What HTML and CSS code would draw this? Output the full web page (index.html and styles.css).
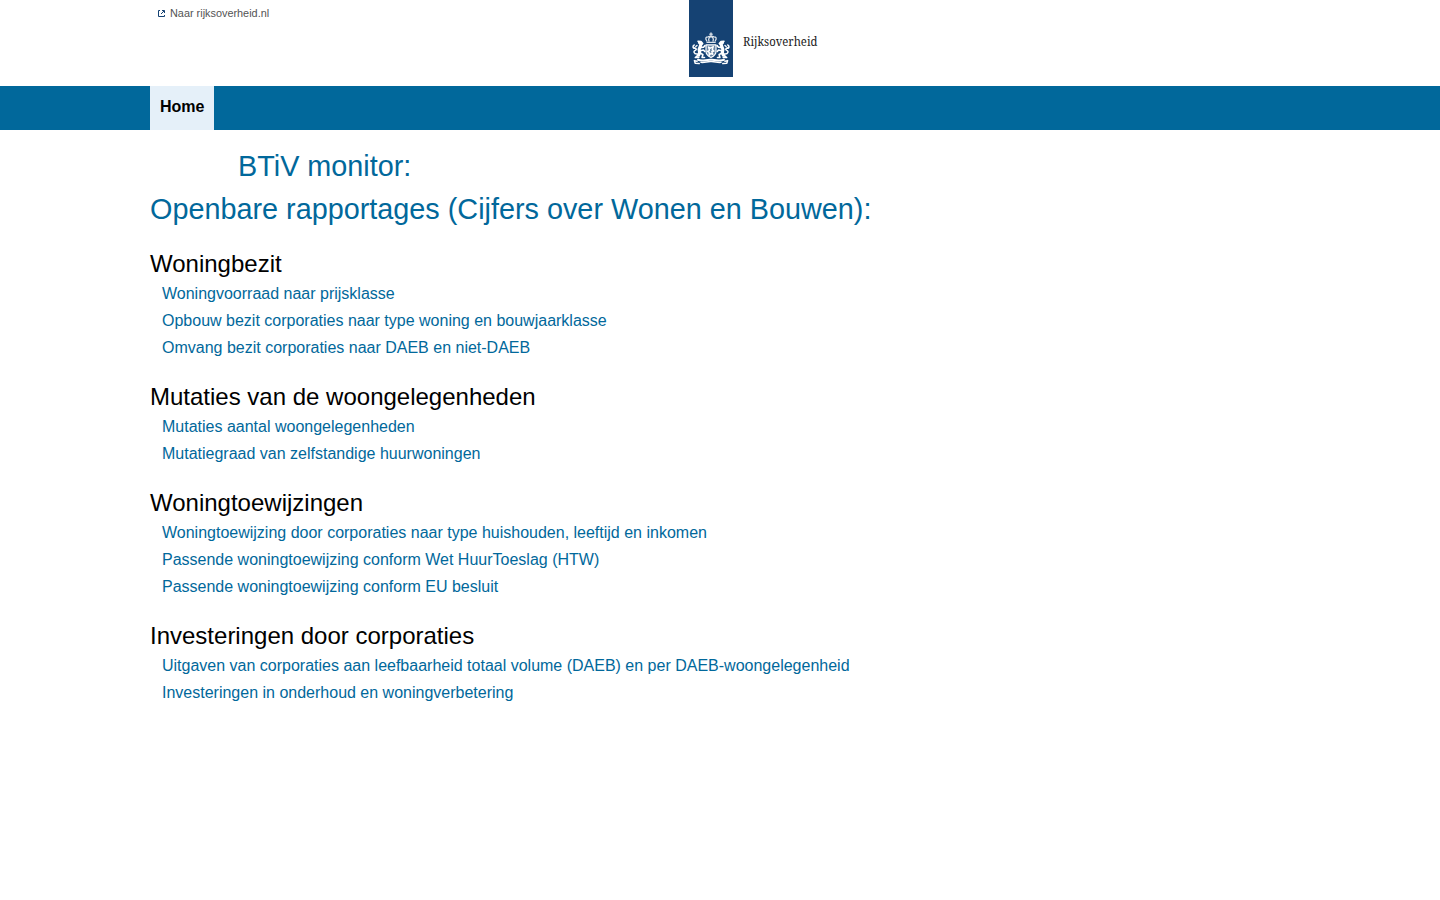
FILE: index.html
```html
<!DOCTYPE html>
<html lang="nl">
<head>
<meta charset="utf-8">
<title>BTiV monitor</title>
<link rel="stylesheet" href="styles.css">
</head>
<body>
<header class="header">
  <a class="toplink" href="#">
    <svg class="ext" viewBox="0 0 8 8"><path d="M2 1.5H.5V7.5H6.5V6" /><path d="M4 1.5H6.5V4M6.2 1.8L3 5" /></svg>
    <span>Naar rijksoverheid.nl</span>
  </a>
  <div class="logo">
    <svg class="emblem" viewBox="0 0 44 77">
      <rect width="44" height="77" fill="#154273"/>
      <g fill="none" stroke="#fff" stroke-linecap="round" stroke-linejoin="round">
        <path stroke-width="1.3" d="M22 33v3M20.8 34.2h2.4M18 42.3h8.2M17.8 41c-2-3-.8-4.3 1.4-4.2 1.2-1 4.4-1 5.6 0 2.2-.1 3.4 1.2 1.4 4.2M20 41c-1-2 .2-4 2-4.4 1.8.4 3 2.4 2 4.4" stroke-opacity=".85"/>
        <path stroke-width="1.2" fill="#fff" fill-opacity=".35" d="M17 44.8h10v6.7c0 3-2.5 4.8-5 6-2.5-1.2-5-3-5-6z"/>
        <path stroke-width="1.4" d="M19.5 47l2 1.2 2.8-1.6-1 3 1.7 1.4-2.2.5 1 2.8-2-.8-1.6 1.7v-2.8l-1.7-1 2-1z"/>
        <g id="lion">
          <path stroke-width="3.2" d="M10.5 42.7l1.4 1.3-.6 2.5-1.2 2.8.6 3.4-1.2 2.5"/>
          <path stroke-width="1.6" d="M9 41.3l3 .2 1.7 2-1.2 1.2M11.5 47.4l3-.2 1.4-1.6M11.3 50.8l3.2-.8 1.2 1.4M10.7 53l3.2 1.5-.8 3h2.4M8.5 55.7l-2.2 1.8h3.5"/>
          <path stroke-width="1.4" d="M8.3 54c-3.8.2-4-3-2-3.7 1.8-.7.8-2.3-.5-2-2.5.3-2.2-2.8-.5-3.3M6.3 48.5L4 46.7M8 45.5l-1.2 1"/>
        </g>
        <use href="#lion" transform="matrix(-1 0 0 1 44 0)"/>
        <path stroke-width="2" d="M9 59.8c4.5 1.7 7.8-.3 13 0 5.2-.3 8.5 1.7 13 0"/>
        <path stroke-width="1.5" d="M8 61.3l-2.6-.7.8 2.6 4 .4M36 61.3l2.6-.7-.8 2.6-4 .4M12 62.3c4 .5 6-1 10-.8 4-.2 6 1.3 10 .8"/>
      </g>
    </svg>
    <svg class="wordmark" viewBox="0 0 90 24"><text x="0" y="16" textLength="74.5" lengthAdjust="spacingAndGlyphs">Rijksoverheid</text></svg>
  </div>
</header>
<nav class="nav"><a class="tab" href="#">Home</a></nav>
<main class="main">
  <h1 class="title">BTiV monitor:</h1>
  <h1>Openbare rapportages (Cijfers over Wonen en Bouwen):</h1>
  <section>
    <h2>Woningbezit</h2>
    <a href="#">Woningvoorraad naar prijsklasse</a>
    <a href="#">Opbouw bezit corporaties naar type woning en bouwjaarklasse</a>
    <a href="#">Omvang bezit corporaties naar DAEB en niet-DAEB</a>
  </section>
  <section>
    <h2>Mutaties van de woongelegenheden</h2>
    <a href="#">Mutaties aantal woongelegenheden</a>
    <a href="#">Mutatiegraad van zelfstandige huurwoningen</a>
  </section>
  <section>
    <h2>Woningtoewijzingen</h2>
    <a href="#">Woningtoewijzing door corporaties naar type huishouden, leeftijd en inkomen</a>
    <a href="#">Passende woningtoewijzing conform Wet HuurToeslag (HTW)</a>
    <a href="#">Passende woningtoewijzing conform EU besluit</a>
  </section>
  <section>
    <h2>Investeringen door corporaties</h2>
    <a href="#">Uitgaven van corporaties aan leefbaarheid totaal volume (DAEB) en per DAEB-woongelegenheid</a>
    <a href="#">Investeringen in onderhoud en woningverbetering</a>
  </section>
</main>
</body>
</html>
```
FILE: styles.css
```css
* { box-sizing: border-box; }
body {
  margin: 0;
  background: #fff;
  color: #000;
  font: 16px/27px "Liberation Sans", Arial, sans-serif;
}
a { color: #01689b; text-decoration: none; }
.header {
  display: flex;
  align-items: flex-start;
  height: 86px;
  padding-left: 158px;
}
.toplink {
  display: flex;
  align-items: center;
  gap: 4px;
  width: 531px;
  height: 26px;
  color: #535353;
  font-size: 10.88px;
}
.ext {
  width: 8px;
  height: 8px;
  fill: none;
  stroke: #154273;
}
.logo { display: flex; align-items: flex-start; }
.emblem { width: 44px; height: 77px; }
.wordmark {
  width: 90px;
  height: 24px;
  margin: 30px 0 0 9.5px;
  overflow: visible;
}
.wordmark text {
  font: 13px "Noto Serif", "DejaVu Serif Condensed", serif;
  fill: #222;
}
.nav {
  display: flex;
  height: 44px;
  padding-left: 150px;
  background: #01689b;
}
.tab {
  padding: 0 10px;
  background: #e5f0f9;
  color: #000;
  font-weight: bold;
  line-height: 42px;
}
.main { padding: 15px 150px 0; }
h1 {
  margin: 0;
  color: #01689b;
  font-size: 28.8px;
  font-weight: normal;
  line-height: 43px;
}
.title { padding-left: 88px; }
h2 {
  margin: 0;
  font-size: 24px;
  font-weight: normal;
  line-height: 32px;
}
section { padding-top: 17px; }
section + section { padding-top: 20px; }
section a { display: block; width: fit-content; margin-left: 12px; }
```
